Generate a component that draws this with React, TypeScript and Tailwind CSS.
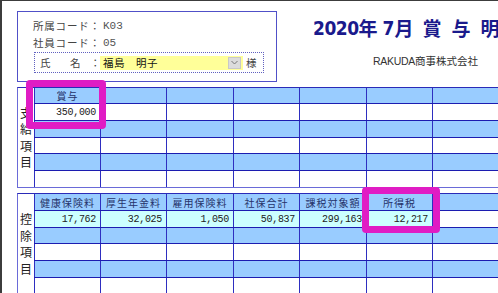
const jp = "font-['Noto_Sans_CJK_JP',sans-serif]";
const mono = "font-['Liberation_Mono','Noto_Sans_CJK_JP',monospace]";

type Cell = { text?: string; bg: string; kind?: "head" | "num" };

const BLUE = "bg-[#99ccff]";
const WHITE = "bg-white";
const CYAN = "bg-[#ccffff]";

const blueRow = (): Cell[] => Array.from({ length: 7 }, () => ({ bg: BLUE }));
const whiteRow = (): Cell[] => Array.from({ length: 7 }, () => ({ bg: WHITE }));

const table1: Cell[][] = [
  [{ text: "賞与", bg: BLUE, kind: "head" }, ...blueRow().slice(1)],
  [{ text: "350,000", bg: WHITE, kind: "num" }, ...whiteRow().slice(1)],
  blueRow(),
  whiteRow(),
  blueRow(),
  whiteRow(),
];

const heads = ["健康保険料", "厚生年金料", "雇用保険料", "社保合計", "課税対象額", "所得税"];
const nums = ["17,762", "32,025", "1,050", "50,837", "299,163", "12,217"];

const table2: Cell[][] = [
  [...heads.map((h) => ({ text: h, bg: BLUE, kind: "head" as const })), { bg: BLUE }],
  [...nums.map((n) => ({ text: n, bg: CYAN, kind: "num" as const })), { bg: WHITE }],
  blueRow(),
  whiteRow(),
  blueRow(),
  whiteRow(),
];

const colWidths = ["w-[66px]", "w-[66px]", "w-[67px]", "w-[66px]", "w-[67px]", "w-[66px]", "w-[67px]"];

const Table = ({
  label,
  rows,
  rowHeights,
}: {
  label: string;
  rows: Cell[][];
  rowHeights: string[];
}) => {
  return (
    <div className="flex w-[490px] border border-[#6a6ad8] border-t-[#2a2ab8] bg-white">
      {/* 縦書きラベル */}
      <div className={`w-[16px] shrink-0 flex flex-col items-center justify-center text-[12px] leading-[16.5px] text-[#222] ${jp}`}>
        {label.split("").map((c, i) => (
          <span key={i}>{c}</span>
        ))}
      </div>

      <div className="flex flex-col">
        {rows.map((row, r) => (
          <div key={r} className={`flex ${rowHeights[r]} ${r < rows.length - 1 ? "border-b border-[#1c1cb0]" : ""}`}>
            {row.map((cell, c) => (
              <div
                key={c}
                className={`${colWidths[c]} shrink-0 h-full border-l border-[#2e2ec0] ${cell.bg} flex items-center ${
                  cell.kind === "num" ? "justify-end pr-[4px]" : "justify-center"
                }`}
              >
                {cell.kind === "head" && (
                  <span className={`text-[10px] tracking-[1px] whitespace-nowrap text-[#26336a] ${jp}`}>{cell.text}</span>
                )}
                {cell.kind === "num" && (
                  <span className={`text-[10px] tracking-[-0.3px] text-[#222] ${mono}`}>{cell.text}</span>
                )}
              </div>
            ))}
          </div>
        ))}
      </div>
    </div>
  );
};

export default function App() {
  return (
    <div className="relative w-[498px] h-[293px] overflow-hidden bg-white border-l-2 border-t border-[#3c3c3c]">
      <div className="pl-[15px] pt-[10px]">
        {/* ヘッダー */}
        <div className="flex">
          <div className={`w-[260px] h-[71px] shrink-0 border border-[#5050c8] px-[15px] pt-[6px] text-[10.5px] text-[#444] ${jp}`}>
            <div className="h-[17px] leading-[16px] flex whitespace-nowrap">
              <span className="w-[70px] tracking-[0.8px]">所属コード：</span>
              <span className={`${mono} text-[11px] text-[#555]`}>K03</span>
            </div>
            <div className="h-[17px] leading-[16px] flex whitespace-nowrap">
              <span className="w-[70px] tracking-[0.8px]">社員コード：</span>
              <span className={`${mono} text-[11px] text-[#555]`}>05</span>
            </div>
            <div className="ml-[1px] w-[230px] h-[21px] border border-dotted border-[#6060c0] flex items-center pl-[5px] whitespace-nowrap">
              <span className="w-[30px]">氏</span>
              <span className="w-[20px]">名</span>
              <span className="w-[10px]">：</span>
              <div className="w-[143px] h-[14px] bg-[#ffff99] flex items-center pl-[3px] text-[#111]">
                <span className="flex-1 tracking-[0.5px]">福島　明子</span>
                <span className="w-[13px] h-[12px] mr-[2px] bg-[#dcdcdc] border border-[#c8c8c8] flex items-center justify-center">
                  <svg width="7" height="5" viewBox="0 0 7 5">
                    <path d="M0.5 1 L3.5 4 L6.5 1" fill="none" stroke="#777" strokeWidth="1" />
                  </svg>
                </span>
              </div>
              <span className="ml-[3px]">様</span>
            </div>
          </div>

          <div className="ml-[36px] pt-[3px] flex flex-col">
            <div className={`flex items-center text-[19px] font-bold text-[#1a1a8c] whitespace-nowrap ${jp}`}>
              <span className="font-['Liberation_Sans_Narrow','DejaVu_Sans_Condensed','Liberation_Sans',sans-serif] tracking-[-0.5px]">2020</span>
              <span>年</span>
              <span className="ml-[5px] font-['Liberation_Sans_Narrow','DejaVu_Sans_Condensed','Liberation_Sans',sans-serif]">7</span>
              <span>月</span>
              <span className="ml-[9px]">賞</span>
              <span className="ml-[10px]">与</span>
              <span className="ml-[10px]">明</span>
              <span className="ml-[9px]">細</span>
            </div>
            <div className={`ml-[60px] mt-[10px] text-[10.5px] text-[#333] whitespace-nowrap ${jp}`}>
              <span className="font-['Liberation_Sans',sans-serif] tracking-[-0.3px]">RAKUDA</span>商事株式会社
            </div>
          </div>
        </div>

        {/* 支給項目 */}
        <div className="mt-[5px]">
          <Table
            label="支給項目"
            rows={table1}
            rowHeights={["h-[16px]", "h-[17px]", "h-[17px]", "h-[16px]", "h-[17px]", "h-[16px]"]}
          />
        </div>

        {/* 控除項目 */}
        <div className="mt-[5px]">
          <Table
            label="控除項目"
            rows={table2}
            rowHeights={["h-[17px]", "h-[17px]", "h-[16px]", "h-[17px]", "h-[17px]", "h-[16px]"]}
          />
        </div>
      </div>

      {/* 強調枠 */}
      <div className="absolute left-[24px] top-[79px] w-[80px] h-[49px] border-[7px] border-[#e01cc4] rounded-[4px]" />
      <div className="absolute left-[360px] top-[186px] w-[78px] h-[46px] border-[7px] border-[#e01cc4] rounded-[4px]" />
    </div>
  );
}
